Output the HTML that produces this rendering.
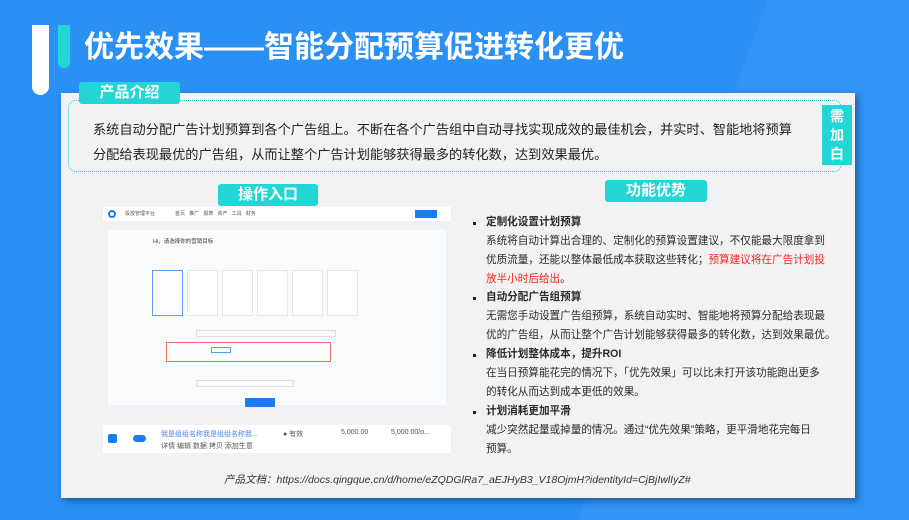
<!DOCTYPE html>
<html><head><meta charset="utf-8"><style>
*{margin:0;padding:0;box-sizing:border-box}
body{width:909px;height:510px;overflow:hidden;background:#2a90f4;font-family:"Liberation Sans","Noto Sans CJK SC",sans-serif;position:relative}
.a{position:absolute}
.tab{position:absolute;background:#22d6d6;color:#fff;font-weight:bold;font-size:15px;text-align:center;border-radius:3px}
.r{position:absolute;left:486px;font-size:10.6px;color:#2a2a2a;line-height:19px;white-space:nowrap}
.b{font-weight:bold}
.dot{position:absolute;left:473px;width:3px;height:3px;background:#222}
</style></head><body>
<div class="a" style="left:680px;top:-40px;width:360px;height:560px;background:rgba(255,255,255,0.04);transform:skewX(-20deg)"></div>
<div class="a" style="left:32px;top:25px;width:17px;height:70px;background:#fff;border-radius:0 0 9px 9px"></div>
<div class="a" style="left:58px;top:25px;width:12px;height:43px;background:#22d6d6;border-radius:0 0 6px 6px"></div>
<div class="a" style="left:84px;top:22px;font-size:30px;font-weight:bold;color:#fff;white-space:nowrap">优先效果——智能分配预算促进转化更优</div>
<div class="a" style="left:61px;top:93px;width:794px;height:405px;background:#f2f2f2;box-shadow:3px 3px 6px rgba(0,40,100,0.5)"></div>
<div class="a" style="left:68px;top:100px;width:774px;height:72px;border:1.5px dotted #22d0d0;border-radius:8px"></div>
<div class="tab" style="left:79px;top:82px;width:101px;height:22px;line-height:22px">产品介绍</div>
<div class="a" style="left:822px;top:105px;width:30px;height:60px;background:#22d6d6;color:#fff;font-weight:bold;font-size:14px;line-height:19px;text-align:center;padding-top:2px">需<br>加<br>白</div>
<div class="a" style="left:93px;top:117px;font-size:13.2px;color:#222;line-height:25px;white-space:nowrap">系统自动分配广告计划预算到各个广告组上。不断在各个广告组中自动寻找实现成效的最佳机会，并实时、智能地将预算<br>分配给表现最优的广告组，从而让整个广告计划能够获得最多的转化数，达到效果最优。</div>
<div class="tab" style="left:218px;top:184px;width:100px;height:22px;line-height:22px">操作入口</div>
<div class="tab" style="left:605px;top:180px;width:102px;height:22px;line-height:22px">功能优势</div>
<div class="a" style="left:103px;top:207px;width:348px;height:204px;background:#eef1f6">
 <div class="a" style="left:0;top:0;width:348px;height:14px;background:#fff;font-size:5px;color:#555;line-height:14px">
  <span class="a" style="left:5px;top:3px;width:8px;height:8px;border:2px solid #1a7cf5;border-radius:50%"></span>
  <span class="a" style="left:22px">投放管理平台</span><span class="a" style="left:72px">首页 &nbsp; 推广 &nbsp; 报表 &nbsp; 资产 &nbsp; 工具 &nbsp; 财务</span>
  <span class="a" style="left:312px;top:3px;width:22px;height:8px;background:#1a7cf5"></span></div>
 <div class="a" style="left:5px;top:23px;width:338px;height:175px;background:#fafbfc"></div>
 <div class="a" style="left:50px;top:30px;font-size:5.5px;color:#333">Hi，请选择你的营销目标</div>
 <div class="a" style="left:49px;top:63px;width:31px;height:46px;border:1px solid #5b9cf5;background:#fff"></div>
 <div class="a" style="left:84px;top:63px;width:31px;height:46px;border:1px solid #e6e6e6;background:#fff"></div>
 <div class="a" style="left:119px;top:63px;width:31px;height:46px;border:1px solid #e6e6e6;background:#fff"></div>
 <div class="a" style="left:154px;top:63px;width:31px;height:46px;border:1px solid #e6e6e6;background:#fff"></div>
 <div class="a" style="left:189px;top:63px;width:31px;height:46px;border:1px solid #e6e6e6;background:#fff"></div>
 <div class="a" style="left:224px;top:63px;width:31px;height:46px;border:1px solid #e6e6e6;background:#fff"></div>
 <div class="a" style="left:93px;top:123px;width:140px;height:7px;border:1px solid #ddd"></div>
 <div class="a" style="left:63px;top:135px;width:165px;height:20px;border:1px solid #f07060"></div>
 <div class="a" style="left:108px;top:140px;width:20px;height:6px;border:1px solid #5b9cf5"></div>
 <div class="a" style="left:93px;top:173px;width:98px;height:7px;border:1px solid #ddd"></div>
 <div class="a" style="left:142px;top:191px;width:30px;height:9px;background:#1a7cf5"></div>
</div>
<div class="a" style="left:103px;top:425px;width:348px;height:28px;background:#fff;font-size:7px;color:#555">
 <span class="a" style="left:5px;top:9px;width:9px;height:9px;background:#1a7cf5;border-radius:2px"></span>
 <span class="a" style="left:30px;top:10px;width:13px;height:7px;background:#1a7cf5;border-radius:4px"></span>
 <span class="a" style="left:58px;top:4px;color:#4a86e8">我是组组名称我是组组名称我...</span>
 <span class="a" style="left:58px;top:16px">详情 编辑 数据 拷贝 添加生意</span>
 <span class="a" style="left:180px;top:4px">● 有效</span>
 <span class="a" style="left:238px;top:4px">5,000.00</span>
 <span class="a" style="left:288px;top:4px">5,000.00/o...</span>
</div>
<div class="dot" style="top:222px"></div>
<div class="r b" style="top:213px">定制化设置计划预算</div>
<div class="r" style="top:232px">系统将自动计算出合理的、定制化的预算设置建议，不仅能最大限度拿到<br>优质流量，还能以整体最低成本获取这些转化；<span style="color:#f22">预算建议将在广告计划投<br>放半小时后给出</span>。</div>
<div class="dot" style="top:297px"></div>
<div class="r b" style="top:288px">自动分配广告组预算</div>
<div class="r" style="top:307px">无需您手动设置广告组预算，系统自动实时、智能地将预算分配给表现最<br>优的广告组，从而让整个广告计划能够获得最多的转化数，达到效果最优。</div>
<div class="dot" style="top:354px"></div>
<div class="r b" style="top:345px">降低计划整体成本，提升ROI</div>
<div class="r" style="top:364px">在当日预算能花完的情况下，「优先效果」可以比未打开该功能跑出更多<br>的转化从而达到成本更低的效果。</div>
<div class="dot" style="top:411px"></div>
<div class="r b" style="top:402px">计划消耗更加平滑</div>
<div class="r" style="top:421px">减少突然起量或掉量的情况。通过“优先效果”策略，更平滑地花完每日<br>预算。</div>
<div class="a" style="left:224px;top:472px;font-size:10.5px;font-style:italic;color:#333;white-space:nowrap">产品文档：https://docs.qingque.cn/d/home/eZQDGlRa7_aEJHyB3_V18OjmH?identityId=CjBjIwlIyZ#</div>
</body></html>
